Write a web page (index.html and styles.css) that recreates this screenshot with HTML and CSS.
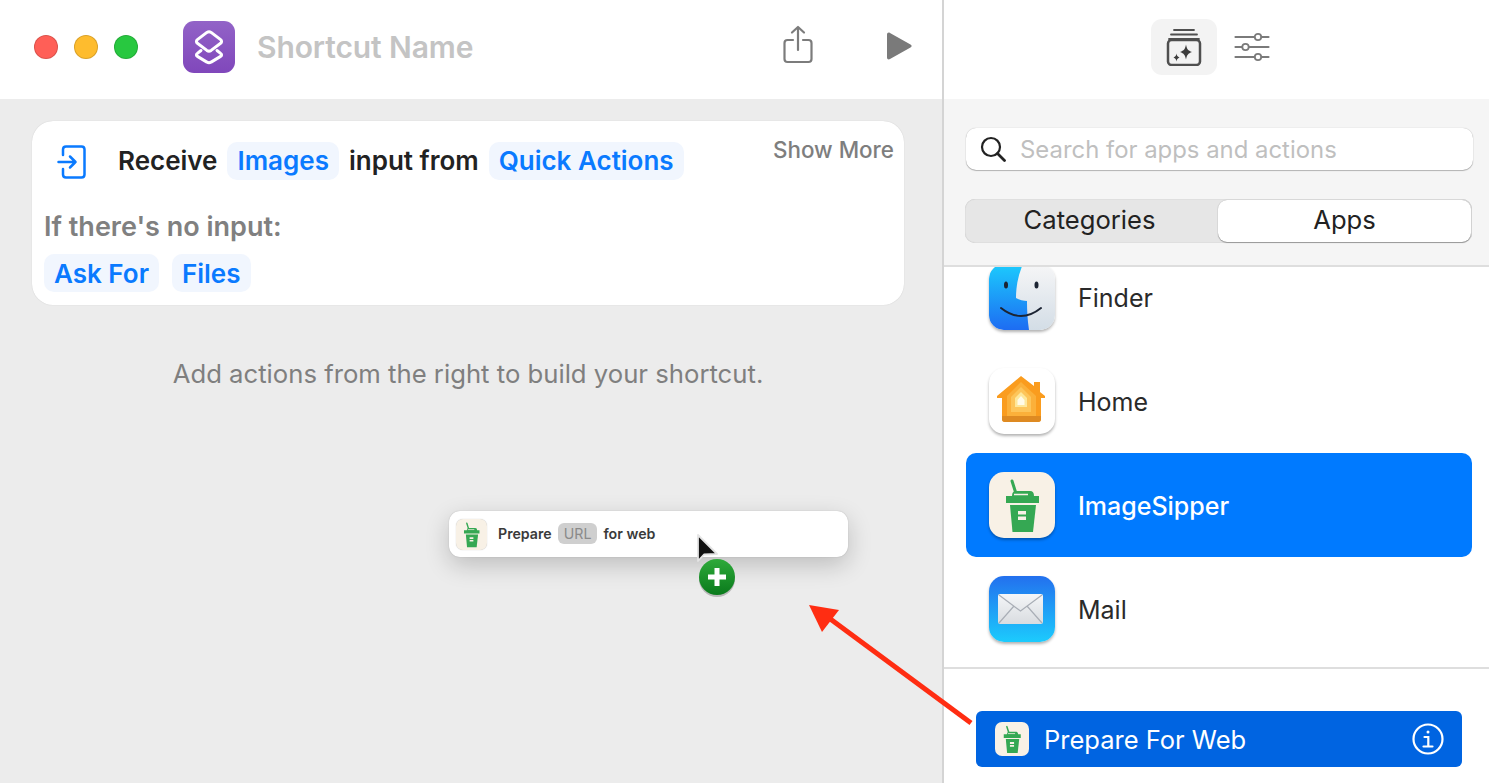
FILE: index.html
```html
<!DOCTYPE html>
<html lang="en">
<head>
<meta charset="utf-8">
<title>Shortcut Name</title>
<link rel="stylesheet" href="styles.css">
</head>
<body>
<div class="window">
  <section class="editor">
    <header class="editor-bar">
      <div class="lights">
        <span class="light red"></span><span class="light yellow"></span><span class="light green"></span>
      </div>
      <div class="app-icon">
        <svg width="52" height="52" viewBox="0 0 52 52" fill="none" stroke="#fff" stroke-width="3" stroke-linejoin="round" stroke-linecap="round">
          <path d="M18 29.500l-3.600 2.900c-1.300 1-1.300 2 0 3l9.500 5.700c1.500 1 2.700 1 4.200 0l9.500-5.700c1.300-1 1.300-2 0-3L34 29.500"/>
          <path d="M23.900 11.400c1.500-1 2.700-1 4.200 0l9.500 7.200c1.300 1 1.300 2.600 0 3.600l-9.500 7.200c-1.500 1-2.700 1-4.200 0l-9.500-7.200c-1.300-1-1.300-2.600 0-3.600z"/>
        </svg>
      </div>
      <div class="title">Shortcut Name</div>
      <svg class="share" width="32" height="40" viewBox="0 0 32 40" fill="none" stroke="#7c7c7c" stroke-width="2.200" stroke-linecap="round" stroke-linejoin="round">
        <path d="M11 15H5.500Q2.500 15 2.500 18V34Q2.500 37 5.500 37H26.500Q29.500 37 29.500 34V18Q29.500 15 26.500 15H21"/>
        <path d="M16 25V2M10 7.500L16 2L22 7.500"/>
      </svg>
      <svg class="play" width="26" height="28" viewBox="0 0 26 28"><path d="M1 2.500C1 .8 2.500 0 4 .9L24.500 12.500C26 13.400 26 14.600 24.500 15.500L4 27.100C2.500 28 1 27.200 1 25.500Z" fill="#7a7a7a"/></svg>
    </header>

    <div class="canvas">
      <article class="card">
        <div class="card-main">
          <svg class="receive-icon" width="30" height="34" viewBox="0 0 30 34" fill="none" stroke="#0a7aff" stroke-width="2.500" stroke-linecap="round" stroke-linejoin="round">
            <path d="M6 10V4.500Q6 1.500 9 1.500H24.500Q27.500 1.500 27.500 4.500V29.500Q27.500 32.500 24.500 32.500H9Q6 32.500 6 29.500V24"/>
            <path d="M1.500 17H18.500M13 11.500L18.500 17L13 22.500"/>
          </svg>
          <span class="strong">Receive</span>
          <span class="token">Images</span>
          <span class="strong">input from</span>
          <span class="token">Quick Actions</span>
          <span class="show-more">Show More</span>
        </div>
        <div class="card-label">If there's no input:</div>
        <div class="card-tokens">
          <span class="token">Ask For</span>
          <span class="token">Files</span>
        </div>
      </article>
      <p class="hint">Add actions from the right to build your shortcut.</p>
    </div>
  </section>

  <aside class="library">
    <header class="library-bar">
      <div class="tab active">
        <svg width="36" height="38" viewBox="0 0 36 38" fill="none" stroke="#4f4f4f" stroke-width="2.400" stroke-linecap="round">
          <path d="M8 2H28M5 6.500H31M3 11H33" stroke-width="1.800"/>
          <rect x="2" y="12" width="32" height="25" rx="3.500" stroke-width="2.500"/>
          <path d="M20 16.500C20.800 21 22 22.500 26 24C22 25.500 20.800 27 20 31.500C19.200 27 18 25.500 14 24C18 22.500 19.200 21 20 16.500Z" fill="#3c3c3c" stroke="none"/>
          <path d="M10.500 25.500C10.900 28 11.500 28.500 13.500 29.500C11.500 30.500 10.900 31 10.500 33.500C10.100 31 9.500 30.500 7.500 29.500C9.500 28.500 10.100 28 10.500 25.500Z" fill="#3c3c3c" stroke="none"/>
        </svg>
      </div>
      <div class="tab">
        <svg width="36" height="30" viewBox="0 0 36 30" fill="#fff" stroke="#7a7a7a" stroke-width="2.200" stroke-linecap="round">
          <path d="M1.500 5H34.500M1.500 15H34.500M1.500 25H34.500"/>
          <circle cx="24" cy="5" r="3.200" stroke-width="1.800"/>
          <circle cx="11.500" cy="15" r="3.200" stroke-width="1.800"/>
          <circle cx="24" cy="25" r="3.200" stroke-width="1.800"/>
        </svg>
      </div>
    </header>

    <div class="filters">
      <div class="search">
        <svg width="26" height="26" viewBox="0 0 26 26" fill="none" stroke="#222" stroke-width="2.200" stroke-linecap="round">
          <circle cx="11" cy="11" r="9"/><path d="M17.500 17.500L24.500 24.500" stroke-width="2.800"/>
        </svg>
        <span>Search for apps and actions</span>
      </div>
      <div class="segments">
        <span class="segment first">Categories</span>
        <span class="segment selected">Apps</span>
      </div>
    </div>

    <div class="apps">
      <div class="apps-scroll">
        <div class="app-row">
          <div class="tile finder">
            <svg width="66" height="66" viewBox="0 0 66 66">
              <defs>
                <linearGradient id="fblue" x1="0" y1="0" x2="0" y2="1"><stop offset="0" stop-color="#1ccbfd"/><stop offset="1" stop-color="#1d6cf2"/></linearGradient>
                <linearGradient id="fgrey" x1="0" y1="0" x2="0" y2="1"><stop offset="0" stop-color="#f6f6f7"/><stop offset="1" stop-color="#d3dde6"/></linearGradient>
              </defs>
              <rect width="66" height="66" rx="14" fill="url(#fgrey)"/>
              <path d="M14 0H34C29 11 27 23 27 34C30 36 35 37 38 37C38 46 38.500 56 40 66H14Q0 66 0 52V14Q0 0 14 0Z" fill="url(#fblue)"/>
              <ellipse cx="17" cy="21" rx="2" ry="3.500" fill="#1c2433"/>
              <ellipse cx="47.500" cy="21" rx="2" ry="3.500" fill="#1c2433"/>
              <path d="M12 44Q32 60 52 44" fill="none" stroke="#1c2433" stroke-width="2" stroke-linecap="round"/>
            </svg>
          </div>
          <span>Finder</span>
        </div>
        <div class="app-row">
          <div class="tile home">
            <svg width="66" height="66" viewBox="0 0 66 66">
              <path d="M32 8L45 18V14H51V24L56 28V30H52V51Q52 54 49 54H16Q13 54 13 51V30H8V28Z" fill="#fa9c1e"/>
              <path d="M13 48H52V51Q52 54 49 54H16Q13 54 13 51Z" fill="#de8a22"/>
              <path d="M32 14L47 28V48H18V28Z" fill="#fbb03a"/>
              <path d="M32 19L42 29V44H22V29Z" fill="#fdc55a"/>
              <path d="M32 24L38 30V39H26V30Z" fill="#fee79a"/>
              <path d="M32 28L35.500 32V37H28.500V32Z" fill="#fffbe8"/>
            </svg>
          </div>
          <span>Home</span>
        </div>
        <div class="app-row current">
          <div class="tile sipper">
            <svg width="66" height="66" viewBox="0 0 66 66"><use href="#cup"/></svg>
          </div>
          <span>ImageSipper</span>
        </div>
        <div class="app-row">
          <div class="tile mail">
            <svg width="66" height="66" viewBox="0 0 66 66">
              <defs>
                <linearGradient id="env" x1="0" y1="0" x2="0" y2="1"><stop offset="0" stop-color="#f4f6f8"/><stop offset="1" stop-color="#d9dce0"/></linearGradient>
              </defs>
              <rect x="9" y="18" width="45" height="30" rx="2" fill="url(#env)"/>
              <path d="M10 19L31.500 35L53 19M10 47L25 30M53 47L38 30" fill="none" stroke="#a9aeb6" stroke-width="1.200"/>
            </svg>
          </div>
          <span>Mail</span>
        </div>
      </div>
    </div>

    <div class="action-area">
      <div class="action">
        <div class="tile-small">
          <svg width="34" height="34" viewBox="0 0 66 66"><use href="#cup"/></svg>
        </div>
        <span class="action-name">Prepare For Web</span>
        <svg class="info" width="32" height="32" viewBox="0 0 32 32" fill="none" stroke="#fff" stroke-width="2.200" stroke-linecap="round">
          <circle cx="16" cy="16" r="14.500"/>
          <circle cx="16" cy="9" r="1.500" fill="#fff" stroke="none"/>
          <path d="M12.500 14H16.300V23M11.500 23.500H20.500"/>
        </svg>
      </div>
    </div>
  </aside>
</div>

<div class="drag-card">
  <div class="drag-tile"><svg width="31" height="31" viewBox="0 0 66 66"><use href="#cup"/></svg></div>
  <span class="drag-text">Prepare</span><span class="drag-token">URL</span><span class="drag-text">for web</span>
</div>

<svg class="cursor" width="60" height="70" viewBox="0 0 60 70">
  <defs>
    <linearGradient id="plus" x1="0" y1="0" x2="0" y2="1"><stop offset="0" stop-color="#2eaa3a"/><stop offset="1" stop-color="#0a7a1c"/></linearGradient>
  </defs>
  <path d="M4 1V27L10 20.500L23 20Z" fill="#111" stroke="#e4e4e4" stroke-width="1.800" stroke-linejoin="round"/>
  <circle cx="23" cy="45" r="18" fill="#000" opacity=".22"/>
  <circle cx="23" cy="43" r="18" fill="url(#plus)"/>
  <path d="M23 34V52M14 43H32" stroke="#fff" stroke-width="5"/>
</svg>

<svg class="arrow" width="170" height="125" viewBox="0 0 170 125">
  <path d="M162 118L20 13" stroke="#ff2d12" stroke-width="5" fill="none"/>
  <path d="M0 0L30 5L13 27Z" fill="#ff2d12"/>
</svg>

<svg class="sprite" width="0" height="0" aria-hidden="true">
  <symbol id="cup" viewBox="0 0 66 66">
    <path d="M23 9L26.500 20" stroke="#35a853" stroke-width="3" stroke-linecap="round"/>
    <path d="M23 24Q23 19 27 19H41Q45 19 45 24H50V31H17V24Z" fill="#35a853"/>
    <path d="M25 22.500H39" stroke="#f8f1e6" stroke-width="1.500"/>
    <path d="M21 33H47L44 60H23.500Z" fill="#35a853"/>
    <path d="M29 39H37V42.500H29ZM29 44.500H37V48H29Z" fill="#f8f1e6"/>
  </symbol>
</svg>
</body>
</html>
```

FILE: styles.css
```css
* { box-sizing: border-box; }
html, body { margin: 0; height: 100%; overflow: hidden; }
body { position: relative; font-family: Inter, "Liberation Sans", sans-serif; color: #222; background: #fff; }

.window { display: flex; width: 1489px; height: 783px; }

/* editor */
.editor { width: 944px; flex: none; display: flex; flex-direction: column; border-right: 2px solid #d4d4d4; }
.editor-bar { height: 99px; flex: none; display: flex; align-items: center; background: #fff; padding: 0 0 6px 34px; }
.lights { display: flex; gap: 16px; }
.light { width: 24px; height: 24px; border-radius: 50%; border: 1px solid rgba(0,0,0,.14); }
.red { background: #ff5f57; }
.yellow { background: #febc2e; }
.green { background: #28c840; }
.app-icon { width: 52px; height: 52px; margin-left: 45px; border-radius: 11px; background: linear-gradient(#9263c7, #8047bb); }
.app-icon svg { display: block; }
.title { margin-left: 22px; font-size: 30px; font-weight: 600; color: #c4c4c4; letter-spacing: -.1px; }
.share { margin-left: 309px; margin-top: -4px; }
.play { margin-left: 72px; margin-top: -2px; }

.canvas { flex: 1; background: #ececec; padding: 22px 38px 0 32px; }
.card { height: 184px; background: #fff; border-radius: 21px; box-shadow: 0 0 1px rgba(0,0,0,.2); padding: 20px 10px 0 12px; }
.card-main { display: flex; align-items: center; gap: 10px; height: 39px; font-size: 26px; }
.receive-icon { margin: 2px 21px 0 13px; }
.strong { font-weight: 600; color: #222; }
.token { display: inline-flex; align-items: center; height: 38px; padding: 0 10px; border-radius: 10px; background: #f1f6fe; color: #0a7aff; font-weight: 600; font-size: 26px; }
.show-more { align-self: flex-start; margin-left: auto; margin-top: -5px; font-size: 22.400px; font-weight: 500; color: #7e7e7e; }
.card-label { margin-top: 30px; font-size: 27px; font-weight: 600; color: #808080; }
.card-tokens { display: flex; gap: 13px; margin-top: 11px; }
.hint { margin: 53px 0 0; text-align: center; font-size: 25.700px; color: #7f7f7f; }

/* library */
.library { flex: 1; display: flex; flex-direction: column; min-width: 0; }
.library-bar { height: 99px; flex: none; display: flex; justify-content: center; align-items: center; gap: 2px; padding-left: 3px; }
.tab { width: 66px; height: 56px; display: flex; align-items: center; justify-content: center; border-radius: 11px; margin-top: -6px; }
.tab.active { background: #f3f3f3; }
.filters { height: 168px; flex: none; background: #f5f5f5; border-bottom: 2px solid #dedede; padding: 29px 16px 0 22px; }
.search { height: 42px; display: flex; align-items: center; gap: 14px; padding-left: 14px; background: #fff; border-radius: 10px; box-shadow: 0 0 1px rgba(0,0,0,.3), 0 1px 1px rgba(0,0,0,.25); font-size: 23.900px; color: #bfbfbf; }
.segments { display: flex; height: 44px; margin: 29px 1px 0 -1px; border-radius: 10px; background: #e6e6e6; box-shadow: inset 0 0 1px rgba(0,0,0,.3); padding: 1px; font-size: 25.600px; line-height: 1; }
.segment { flex: 1; display: flex; align-items: center; justify-content: center; padding-bottom: 2px; color: #222; }
.segment.first { padding-right: 5px; }
.segment.selected { flex: none; width: 253px; background: #fff; border-radius: 9px; box-shadow: 0 0 1px rgba(0,0,0,.3), 0 1px 1px rgba(0,0,0,.3); }

.apps { height: 402px; flex: none; overflow: hidden; border-bottom: 2px solid #dedede; background: #fff; }
.apps-scroll { margin-top: -22px; padding: 0 17px 0 22px; }
.app-row { height: 104px; display: flex; align-items: center; gap: 23px; padding-left: 23px; font-size: 25px; border-radius: 10px; color: #2a2a2a; }
.app-row > span { padding-top: 2px; }
.app-row.current { background: #007aff; color: #fff; font-weight: 500; }
.tile { width: 66px; height: 66px; flex: none; border-radius: 15px; overflow: hidden; box-shadow: 0 2px 3px rgba(0,0,0,.3); }
.tile svg { display: block; }
.home { background: #fff; }
.sipper { background: #f8f1e6; }
.mail { background: linear-gradient(#2370ee, #1ccbfd); }

.action-area { flex: 1; padding: 42px 27px 0 32px; }
.action { height: 56px; display: flex; align-items: center; padding: 0 19px; background: #0064e1; border-radius: 6px; color: #fff; font-size: 25.500px; }
.tile-small { width: 34px; height: 34px; flex: none; background: #f8f1e6; border-radius: 7px; }
.tile-small svg { display: block; }
.action-name { margin-left: 15px; }
.info { margin-left: auto; margin-right: -1px; }

/* overlays */
.drag-card { position: absolute; left: 449px; top: 511px; width: 399px; height: 46px; display: flex; align-items: center; gap: 6px; padding-left: 7px; background: #fff; border-radius: 11px; box-shadow: 0 8px 24px rgba(0,0,0,.2), 0 0 1px rgba(0,0,0,.3); font-size: 14.200px; font-weight: 600; color: #3a3a3a; }
.drag-tile { width: 31px; height: 31px; margin-right: 5px; background: #f8f1e6; border-radius: 7px; box-shadow: 0 0 1px rgba(0,0,0,.3); }
.drag-tile svg { display: block; }
.drag-text { margin-top: -2px; }
.drag-token { height: 21px; margin-top: -2px; padding: 0 6px; display: flex; align-items: center; background: #cfcfcf; border-radius: 6px; color: #8a8a8a; font-weight: 400; }
.cursor { position: absolute; left: 694px; top: 534px; }
.arrow { position: absolute; left: 809px; top: 605px; }
.sprite { position: absolute; }
```
